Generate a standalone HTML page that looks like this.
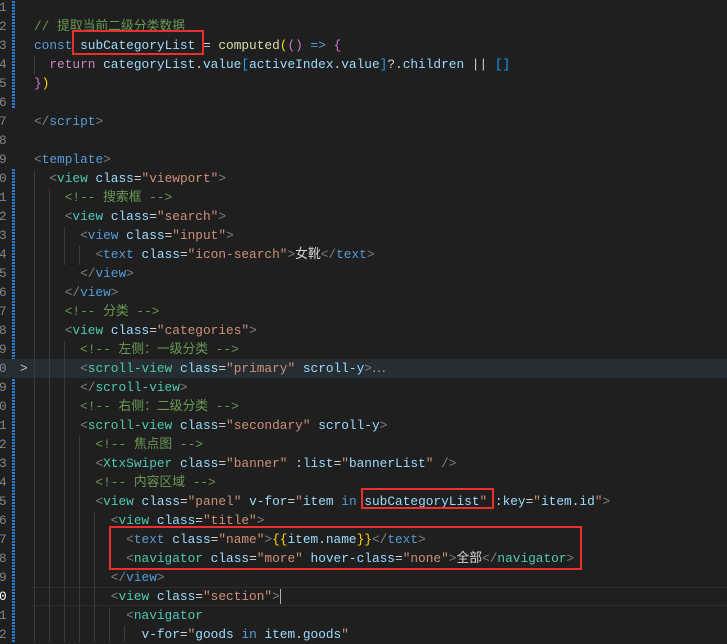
<!DOCTYPE html>
<html><head><meta charset="utf-8"><style>
html,body{margin:0;padding:0;background:#1f1f1f;width:727px;height:640px;overflow:hidden}
.r{position:absolute;left:0;width:727px;height:19px;line-height:19px;font-family:"Liberation Mono","Noto Sans CJK SC",monospace;font-size:12.8px;white-space:pre;color:#d4d4d4}
.n{position:absolute;left:-1px;width:9px;color:#858585;text-align:left}
.c{position:absolute;left:34px}
.cm{color:#6a9955}.g{color:#808080}.t{color:#4ec9b0}.b{color:#569cd6}.a{color:#9cdcfe}.s{color:#ce9178}.k{color:#569cd6}.p{color:#c586c0}.f{color:#dcdcaa}.y{color:#ffd700}.m{color:#da70d6}.l{color:#179fff}.w{color:#d4d4d4}
.mod{position:absolute;left:12px;width:3px;background:repeating-linear-gradient(#1f1f1f 0 1px,#2a7fd4 1px 3px)}
.ig{position:absolute;width:1px;background:#3a3a3a}
.box{position:absolute;border:2px solid #e8302f}
#w{position:absolute;left:0;top:2px;width:727px;height:640px}
</style></head><body><div id="w">
<div class="mod" style="top:-2px;height:108px"></div>
<div class="mod" style="top:166px;height:474px"></div>
<div style="position:absolute;left:0;top:357px;width:727px;height:19px;background:#262d33"></div>
<div style="position:absolute;left:32px;top:585px;width:695px;height:17px;border-top:1px solid #2c2c2c;border-bottom:1px solid #2c2c2c"></div>
<div class="ig" style="left:34px;top:54px;height:19px"></div>
<div class="ig" style="left:34px;top:168px;height:472px"></div>
<div class="ig" style="left:49px;top:187px;height:453px"></div>
<div class="ig" style="left:64px;top:225px;height:38px"></div>
<div class="ig" style="left:79px;top:244px;height:19px"></div>
<div class="ig" style="left:64px;top:339px;height:301px"></div>
<div class="ig" style="left:79px;top:434px;height:206px"></div>
<div class="ig" style="left:94px;top:510px;height:130px"></div>
<div class="ig" style="left:109px;top:529px;height:38px"></div>
<div class="ig" style="left:109px;top:605px;height:35px"></div>
<div class="ig" style="left:124px;top:624px;height:16px"></div>

<div class="r" style="top:-4px"><span class="n">1</span></div>
<div class="r" style="top:15px"><span class="n">2</span><span class="c cm">// 提取当前二级分类数据</span></div>
<div class="r" style="top:34px"><span class="n">3</span><span class="c"><span class="k">const</span> <span class="a">subCategoryList</span> = <span class="f">computed</span><span class="y">(</span><span class="m">()</span> <span class="k">=&gt;</span> <span class="m">{</span></span></div>
<div class="r" style="top:53px"><span class="n">4</span><span class="c">  <span class="p">return</span> <span class="a">categoryList</span>.<span class="a">value</span><span class="l">[</span><span class="a">activeIndex</span>.<span class="a">value</span><span class="l">]</span>?.<span class="a">children</span> || <span class="l">[]</span></span></div>
<div class="r" style="top:72px"><span class="n">5</span><span class="c"><span class="m">}</span><span class="y">)</span></span></div>
<div class="r" style="top:91px"><span class="n">6</span></div>
<div class="r" style="top:110px"><span class="n">7</span><span class="c"><span class="g">&lt;/</span><span class="b">script</span><span class="g">&gt;</span></span></div>
<div class="r" style="top:129px"><span class="n">8</span></div>
<div class="r" style="top:148px"><span class="n">9</span><span class="c"><span class="g">&lt;</span><span class="b">template</span><span class="g">&gt;</span></span></div>
<div class="r" style="top:167px"><span class="n">0</span><span class="c">  <span class="g">&lt;</span><span class="t">view</span> <span class="a">class</span>=<span class="s">"viewport"</span><span class="g">&gt;</span></span></div>
<div class="r" style="top:186px"><span class="n">1</span><span class="c cm">    &lt;!-- 搜索框 --&gt;</span></div>
<div class="r" style="top:205px"><span class="n">2</span><span class="c">    <span class="g">&lt;</span><span class="t">view</span> <span class="a">class</span>=<span class="s">"search"</span><span class="g">&gt;</span></span></div>
<div class="r" style="top:224px"><span class="n">3</span><span class="c">      <span class="g">&lt;</span><span class="b">view</span> <span class="a">class</span>=<span class="s">"input"</span><span class="g">&gt;</span></span></div>
<div class="r" style="top:243px"><span class="n">4</span><span class="c">        <span class="g">&lt;</span><span class="b">text</span> <span class="a">class</span>=<span class="s">"icon-search"</span><span class="g">&gt;</span>女靴<span class="g">&lt;/</span><span class="b">text</span><span class="g">&gt;</span></span></div>
<div class="r" style="top:262px"><span class="n">5</span><span class="c">      <span class="g">&lt;/</span><span class="b">view</span><span class="g">&gt;</span></span></div>
<div class="r" style="top:281px"><span class="n">6</span><span class="c">    <span class="g">&lt;/</span><span class="b">view</span><span class="g">&gt;</span></span></div>
<div class="r" style="top:300px"><span class="n">7</span><span class="c cm">    &lt;!-- 分类 --&gt;</span></div>
<div class="r" style="top:319px"><span class="n">8</span><span class="c">    <span class="g">&lt;</span><span class="t">view</span> <span class="a">class</span>=<span class="s">"categories"</span><span class="g">&gt;</span></span></div>
<div class="r" style="top:338px"><span class="n">9</span><span class="c cm">      &lt;!-- 左侧：一级分类 --&gt;</span></div>
<div class="r" style="top:357px"><span class="n">0</span><span style="position:absolute;left:20px;color:#c5c5c5">&gt;</span><span class="c">      <span class="g">&lt;</span><span class="t">scroll-view</span> <span class="a">class</span>=<span class="s">"primary"</span> <span class="a">scroll-y</span><span class="g">&gt;</span><span style="color:#999">⋯</span></span></div>
<div class="r" style="top:376px"><span class="n">9</span><span class="c">      <span class="g">&lt;/</span><span class="t">scroll-view</span><span class="g">&gt;</span></span></div>
<div class="r" style="top:395px"><span class="n">0</span><span class="c cm">      &lt;!-- 右侧：二级分类 --&gt;</span></div>
<div class="r" style="top:414px"><span class="n">1</span><span class="c">      <span class="g">&lt;</span><span class="t">scroll-view</span> <span class="a">class</span>=<span class="s">"secondary"</span> <span class="a">scroll-y</span><span class="g">&gt;</span></span></div>
<div class="r" style="top:433px"><span class="n">2</span><span class="c cm">        &lt;!-- 焦点图 --&gt;</span></div>
<div class="r" style="top:452px"><span class="n">3</span><span class="c">        <span class="g">&lt;</span><span class="t">XtxSwiper</span> <span class="a">class</span>=<span class="s">"banner"</span> <span class="a">:list</span>=<span class="s">"</span><span class="a">bannerList</span><span class="s">"</span> <span class="g">/&gt;</span></span></div>
<div class="r" style="top:471px"><span class="n">4</span><span class="c cm">        &lt;!-- 内容区域 --&gt;</span></div>
<div class="r" style="top:490px"><span class="n">5</span><span class="c">        <span class="g">&lt;</span><span class="t">view</span> <span class="a">class</span>=<span class="s">"panel"</span> <span class="a">v-for</span>=<span class="s">"</span><span class="a">item</span> <span class="k">in</span> <span class="a">subCategoryList</span><span class="s">"</span> <span class="a">:key</span>=<span class="s">"</span><span class="a">item</span>.<span class="a">id</span><span class="s">"</span><span class="g">&gt;</span></span></div>
<div class="r" style="top:509px"><span class="n">6</span><span class="c">          <span class="g">&lt;</span><span class="t">view</span> <span class="a">class</span>=<span class="s">"title"</span><span class="g">&gt;</span></span></div>
<div class="r" style="top:528px"><span class="n">7</span><span class="c">            <span class="g">&lt;</span><span class="b">text</span> <span class="a">class</span>=<span class="s">"name"</span><span class="g">&gt;</span><span class="y">{{</span><span class="a">item</span>.<span class="a">name</span><span class="y">}}</span><span class="g">&lt;/</span><span class="b">text</span><span class="g">&gt;</span></span></div>
<div class="r" style="top:547px"><span class="n">8</span><span class="c">            <span class="g">&lt;</span><span class="t">navigator</span> <span class="a">class</span>=<span class="s">"more"</span> <span class="a">hover-class</span>=<span class="s">"none"</span><span class="g">&gt;</span>全部<span class="g">&lt;/</span><span class="t">navigator</span><span class="g">&gt;</span></span></div>
<div class="r" style="top:566px"><span class="n">9</span><span class="c">          <span class="g">&lt;/</span><span class="b">view</span><span class="g">&gt;</span></span></div>
<div class="r" style="top:585px"><span class="n" style="color:#fff">0</span><span class="c">          <span class="g">&lt;</span><span class="t">view</span> <span class="a">class</span>=<span class="s">"section"</span><span class="g">&gt;</span><span style="border-left:1.5px solid #aeafad"></span></span></div>
<div class="r" style="top:604px"><span class="n">1</span><span class="c">            <span class="g">&lt;</span><span class="t">navigator</span></span></div>
<div class="r" style="top:623px"><span class="n">2</span><span class="c">              <span class="a">v-for</span>=<span class="s">"</span><span class="a">goods</span> <span class="k">in</span> <span class="a">item</span>.<span class="a">goods</span><span class="s">"</span></span></div>

<div class="box" style="left:72px;top:28px;width:128px;height:21px"></div>
<div class="box" style="left:361px;top:486px;width:129px;height:17px"></div>
<div class="box" style="left:109px;top:524px;width:469px;height:40px"></div>
</div></body></html>
